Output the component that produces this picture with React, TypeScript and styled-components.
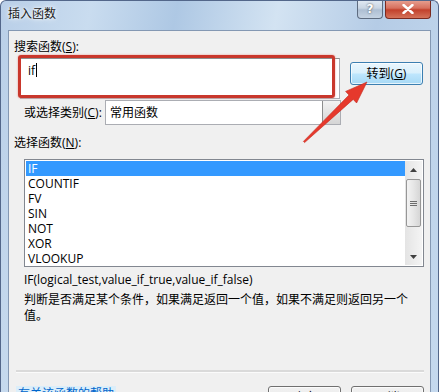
import * as React from 'react';
import styled, { createGlobalStyle } from 'styled-components';

const GlobalStyle = createGlobalStyle`
  html, body {
    margin: 0;
    padding: 0;
    background: #ffffff;
  }
  body {
    font-family: "Open Sans", "Noto Sans CJK SC", sans-serif;
    font-size: 12px;
    color: #000;
  }
`

const Window = styled.div`
  width: 439px;
  height: 392px;
  overflow: hidden;
  display: flex;
  flex-direction: column;
  box-sizing: border-box;
  border: 1px solid #53678a;
  border-bottom: none;
  border-radius: 6px 6px 0 0;
  background: linear-gradient(100deg, #b9cfe8 0%, #c9dcef 18%, #aec8e4 35%, #d3e3f2 55%, #b5cce6 75%, #c5d9ee 100%);
`
const TitleBar = styled.div`
  height: 29px;
  flex-shrink: 0;
  display: flex;
  align-items: flex-start;
  padding-left: 7px;
`
const Title = styled.div`
  margin-top: 5px;
  line-height: 16px;
  font-size: 12px;
  color: #1a1a1a;
  text-shadow: 0 0 6px #ffffff, 0 0 3px #ffffff;
`
const Controls = styled.div`
  margin-left: auto;
  margin-right: 7px;
  display: flex;
  gap: 2px;
`
const CaptionButton = styled.div<{ $close?: boolean }>`
  width: ${p => (p.$close ? 46 : 26)}px;
  height: 19px;
  margin-top: -1px;
  box-sizing: border-box;
  border: 1px solid ${p => (p.$close ? '#7a2a20' : '#5e6c80')};
  border-top: none;
  border-radius: 0 0 4px 4px;
  display: flex;
  align-items: center;
  justify-content: center;
  font-family: "DejaVu Sans", sans-serif;
  font-weight: bold;
  font-size: 12px;
  color: #ffffff;
  background: ${p =>
    p.$close
      ? 'linear-gradient(#e8a394 0%, #d7705e 45%, #c2412c 55%, #d4735a 100%)'
      : 'linear-gradient(#e3ebf4 0%, #c9d5e3 45%, #aebfd3 55%, #c5d3e3 100%)'};
  text-shadow: 0 0 2px #3a3a3a;
`
const Client = styled.div`
  flex: 1 0 auto;
  margin: 0 7px;
  position: relative;
  background: #f0f0f0;
  border: 1px solid #8498b3;
  border-bottom: none;
  padding: 8px 6px 0 5px;
`
const Label = styled.div<{ $indent?: number }>`
  line-height: 16px;
  padding-left: ${p => p.$indent || 0}px;
  white-space: nowrap;
`
const SearchRow = styled.div`
  position: relative;
  display: flex;
  align-items: flex-start;
  gap: 10px;
  margin: 3px 0 0 6px;
`
const SearchInput = styled.div`
  width: 320px;
  height: 41px;
  box-sizing: border-box;
  background: #fff;
  border: 1px solid #abadb3;
  border-top-color: #8e8f8f;
  padding: 4px 7px;
  line-height: 16px;
`
const Caret = styled.span`
  display: inline-block;
  width: 1px;
  height: 14px;
  margin-left: 1px;
  vertical-align: -2px;
  background: #000;
`
const Highlight = styled.div`
  position: absolute;
  left: -2px;
  top: -3px;
  width: 317px;
  height: 43px;
  box-sizing: border-box;
  border: 3px solid #c9372c;
  border-radius: 3px;
  box-shadow: 0 0 2px #e98a80;
  pointer-events: none;
`
const PushButton = styled.div<{ $hot?: boolean }>`
  width: 73px;
  height: 23px;
  box-sizing: border-box;
  display: flex;
  align-items: center;
  justify-content: center;
  border: 1px solid ${p => (p.$hot ? '#3c7fb1' : '#707070')};
  border-radius: 3px;
  background: ${p =>
    p.$hot
      ? 'linear-gradient(#eaf6fd 0%, #d9f0fc 48%, #bee6fd 52%, #a7d9f5 100%)'
      : 'linear-gradient(#f2f2f2 0%, #ebebeb 48%, #dddddd 52%, #cfcfcf 100%)'};
  box-shadow: inset 0 0 0 1px rgba(255, 255, 255, 0.7);
  line-height: 16px;
`
const GoButton = styled(PushButton)`
  margin-top: 4px;
`
const CategoryRow = styled.div`
  display: flex;
  align-items: center;
  margin: 1px 0 0 10px;
`
const CategoryLabel = styled(Label)`
  width: 81px;
`
const Combo = styled.div`
  width: 236px;
  height: 25px;
  box-sizing: border-box;
  display: flex;
  align-items: center;
  background: #fff;
  border: 1px solid #abadb3;
  padding-left: 4px;
  line-height: 16px;
`
const ComboText = styled.span`
  flex: 1;
`
const ComboDrop = styled.div`
  width: 18px;
  height: 23px;
  box-sizing: border-box;
  border-left: 1px solid #8d8d8d;
  background: linear-gradient(#f2f2f2, #d5d5d5);
`
const FuncLabel = styled(Label)`
  margin-top: 10px;
`
const ListBox = styled.div`
  width: 400px;
  height: 108px;
  box-sizing: border-box;
  margin: 8px 0 0 10px;
  border: 1px solid #828790;
  background: #fff;
  display: flex;
  padding: 1px;
`
const Rows = styled.div`
  flex: 1;
`
const Row = styled.div<{ $selected?: boolean }>`
  height: 15px;
  line-height: 15px;
  padding-left: 2px;
  background: ${p => (p.$selected ? '#3399ff' : 'transparent')};
  color: ${p => (p.$selected ? '#fff' : '#000')};
`
const ScrollBar = styled.div`
  width: 17px;
  display: flex;
  flex-direction: column;
  background: linear-gradient(90deg, #e4e4e4, #f4f4f4);
`
const ScrollArrow = styled.div`
  height: 17px;
  display: flex;
  align-items: center;
  justify-content: center;
`
const ScrollTrack = styled.div`
  flex: 1;
`
const Thumb = styled.div`
  height: 48px;
  margin: 1px 0 0 1px;
  width: 15px;
  box-sizing: border-box;
  border: 1px solid #979797;
  border-radius: 2px;
  background: linear-gradient(90deg, #f3f3f3, #e6e6e6 50%, #d6d6d6);
  display: flex;
  align-items: center;
  justify-content: center;
`
const Syntax = styled.div`
  margin: 5px 0 0 10px;
  line-height: 16px;
`
const Description = styled.div`
  width: 390px;
  margin: 4px 0 0 10px;
  line-height: 16px;
`
const Separator = styled.div`
  margin: 46px 0 0 2px;
  width: 408px;
  height: 2px;
  background: #dadada;
  border-bottom: 1px solid #fbfbfb;
`
const Footer = styled.div`
  display: flex;
  align-items: flex-start;
  margin: 13px 0 0 2px;
`
const HelpLink = styled.div`
  color: #0066cc;
  line-height: 16px;
  background: #dbeefa;
  padding: 0 2px;
`
const FooterButtons = styled.div`
  margin-left: auto;
  display: flex;
  gap: 10px;
`
const Arrow = styled.svg`
  position: absolute;
  left: 281px;
  top: 39px;
  width: 85px;
  height: 80px;
  overflow: visible;
  pointer-events: none;
`

const functions = ['IF', 'COUNTIF', 'FV', 'SIN', 'NOT', 'XOR', 'VLOOKUP']

export default function App() {
  return (
    <>
      <GlobalStyle />
      <Window>
        <TitleBar>
          <Title>插入函数</Title>
          <Controls>
            <CaptionButton>?</CaptionButton>
            <CaptionButton $close>
              <svg width="12" height="10" viewBox="0 0 12 10">
                <path d="M1.5 1 L10.5 9 M10.5 1 L1.5 9" stroke="#fff" strokeWidth="2.4" strokeLinecap="round" />
              </svg>
            </CaptionButton>
          </Controls>
        </TitleBar>
        <Client>
          <Label>搜索函数(<u>S</u>):</Label>
          <SearchRow>
            <SearchInput>if<Caret /></SearchInput>
            <GoButton $hot>转到(<u>G</u>)</GoButton>
            <Highlight />
          </SearchRow>
          <CategoryRow>
            <CategoryLabel>或选择类别(<u>C</u>):</CategoryLabel>
            <Combo>
              <ComboText>常用函数</ComboText>
              <ComboDrop />
            </Combo>
          </CategoryRow>
          <FuncLabel>选择函数(<u>N</u>):</FuncLabel>
          <ListBox>
            <Rows>
              {functions.map((f, i) => (
                <Row key={f} $selected={i === 0}>{f}</Row>
              ))}
            </Rows>
            <ScrollBar>
              <ScrollArrow>
                <svg width="7" height="4" viewBox="0 0 7 4"><path d="M0 4 L3.5 0 L7 4 Z" fill="#404040" /></svg>
              </ScrollArrow>
              <Thumb>
                <svg width="7" height="7" viewBox="0 0 7 7">
                  <path d="M0 1.5 H7 M0 3.5 H7 M0 5.5 H7" stroke="#6d6d6d" strokeWidth="1" />
                </svg>
              </Thumb>
              <ScrollTrack />
              <ScrollArrow>
                <svg width="7" height="4" viewBox="0 0 7 4"><path d="M0 0 L7 0 L3.5 4 Z" fill="#404040" /></svg>
              </ScrollArrow>
            </ScrollBar>
          </ListBox>
          <Syntax>IF(logical_test,value_if_true,value_if_false)</Syntax>
          <Description>判断是否满足某个条件，如果满足返回一个值，如果不满足则返回另一个值。</Description>
          <Separator />
          <Footer>
            <HelpLink>有关该函数的帮助</HelpLink>
            <FooterButtons>
              <PushButton>确定</PushButton>
              <PushButton>取消</PushButton>
            </FooterButtons>
          </Footer>
          <Arrow viewBox="0 0 85 80">
            <polygon
              points="13.4,71.4 59,25 55.6,21.4 77,12 66.6,33 63.2,29.4 14.6,72.6"
              fill="#e6392c"
              stroke="#c22a20"
              strokeWidth="0.6"
              strokeLinejoin="round"
            />
          </Arrow>
        </Client>
      </Window>
    </>
  );
}
